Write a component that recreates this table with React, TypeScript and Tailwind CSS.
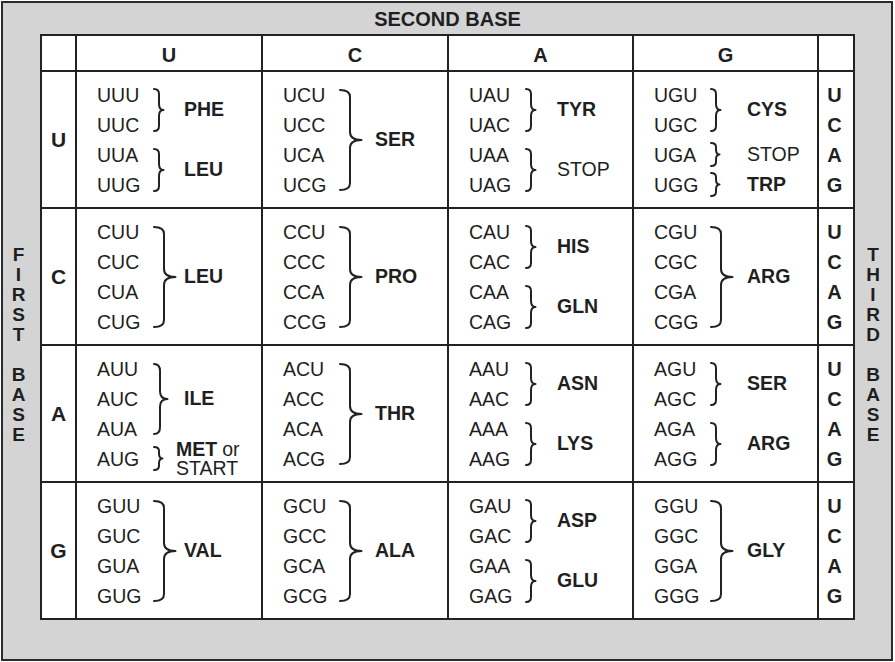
import React from "react";

type Group = { c: string[]; l: React.ReactNode; normal?: boolean; shift?: string };
type Row = { base: string; cells: Group[][] };

const rows: Row[] = [
  {
    base: "U",
    cells: [
      [
        { c: ["UUU", "UUC"], l: "PHE" },
        { c: ["UUA", "UUG"], l: "LEU" },
      ],
      [{ c: ["UCU", "UCC", "UCA", "UCG"], l: "SER" }],
      [
        { c: ["UAU", "UAC"], l: "TYR" },
        { c: ["UAA", "UAG"], l: "STOP", normal: true },
      ],
      [
        { c: ["UGU", "UGC"], l: "CYS" },
        { c: ["UGA"], l: "STOP", normal: true },
        { c: ["UGG"], l: "TRP" },
      ],
    ],
  },
  {
    base: "C",
    cells: [
      [{ c: ["CUU", "CUC", "CUA", "CUG"], l: "LEU" }],
      [{ c: ["CCU", "CCC", "CCA", "CCG"], l: "PRO" }],
      [
        { c: ["CAU", "CAC"], l: "HIS" },
        { c: ["CAA", "CAG"], l: "GLN" },
      ],
      [{ c: ["CGU", "CGC", "CGA", "CGG"], l: "ARG" }],
    ],
  },
  {
    base: "A",
    cells: [
      [
        { c: ["AUU", "AUC", "AUA"], l: "ILE" },
        {
          c: ["AUG"],
          shift: "ml-[-9px]",
          l: (
            <div className="flex flex-col leading-[19px] my-[-4px]">
              <div>
                <span className="font-bold">MET</span>
                <span className="font-normal ml-[5px]">or</span>
              </div>
              <div className="font-normal">START</div>
            </div>
          ),
        },
      ],
      [{ c: ["ACU", "ACC", "ACA", "ACG"], l: "THR" }],
      [
        { c: ["AAU", "AAC"], l: "ASN" },
        { c: ["AAA", "AAG"], l: "LYS" },
      ],
      [
        { c: ["AGU", "AGC"], l: "SER" },
        { c: ["AGA", "AGG"], l: "ARG" },
      ],
    ],
  },
  {
    base: "G",
    cells: [
      [{ c: ["GUU", "GUC", "GUA", "GUG"], l: "VAL" }],
      [{ c: ["GCU", "GCC", "GCA", "GCG"], l: "ALA" }],
      [
        { c: ["GAU", "GAC"], l: "ASP" },
        { c: ["GAA", "GAG"], l: "GLU" },
      ],
      [{ c: ["GGU", "GGC", "GGA", "GGG"], l: "GLY" }],
    ],
  },
];

const colShift = ["ml-[-1px]", "ml-[4px]", "ml-[0px]", "ml-[5px]"];

const braceSize: Record<number, [number, number]> = {
  1: [10, 25],
  2: [11, 44],
  3: [15, 72],
  4: [23, 102],
};

function Brace({ n }: { n: number }) {
  const [w, h] = braceSize[n];
  const a = n >= 3 ? Math.round(w * 0.48) : 6;
  const r = n >= 3 ? 8 : n === 2 ? 6 : 5;
  const m = h / 2;
  const d = `M1 1 Q${a} 1 ${a} ${r} L${a} ${m - r} Q${a} ${m} ${w - 0.5} ${m} Q${a} ${m} ${a} ${m + r} L${a} ${h - r} Q${a} ${h - 1} 1 ${h - 1}`;
  return (
    <svg width={w} height={h} viewBox={`0 0 ${w} ${h}`} className="overflow-visible">
      <path d={d} fill="none" stroke="#222" strokeWidth={2} strokeLinecap="round" strokeLinejoin="round" />
    </svg>
  );
}

function Cell({ groups, col }: { groups: Group[]; col: number }) {
  return (
    <div className="bg-white flex flex-col justify-center pl-[20px]">
      {groups.map((g, i) => (
        <div key={i} className="flex items-center">
          <div className="w-[56px] flex flex-col">
            {g.c.map((c) => (
              <div key={c} className="h-[30px] leading-[30px]">
                {c}
              </div>
            ))}
          </div>
          <div className="w-[32px] flex items-center">
            <Brace n={g.c.length} />
          </div>
          <div className={`${g.shift ?? colShift[col]} ${g.normal ? "font-normal" : "font-bold"}`}>{g.l}</div>
        </div>
      ))}
    </div>
  );
}

function Vertical({ text }: { text: string }) {
  return (
    <div className="flex flex-col items-center text-[19px] font-bold leading-[20px]">
      {text.split("").map((ch, i) => (
        <div key={i} className="h-[20px]">
          {ch === " " ? "\u00a0" : ch}
        </div>
      ))}
    </div>
  );
}

export default function App() {
  return (
    <div className="w-[895px] h-[662px] bg-white pt-[1px] pl-[1px] font-['Liberation_Sans',Arial,sans-serif] text-[#1f1f1f] text-[19.5px]">
      <div className="w-[892px] h-[660px] border-2 border-[#2b2b2b] bg-[#d4d4d4] flex flex-col">
        <div className="h-[31px] ml-[37px] w-[815px] flex items-center justify-center text-[20px] font-bold">
          SECOND BASE
        </div>
        <div className="flex">
          <div className="w-[37px] h-[586px] pt-[36px] pr-[6px] flex items-center justify-center">
            <Vertical text="FIRST BASE" />
          </div>
          <div className="w-[815px] h-[586px] bg-[#222] p-[2px] grid grid-cols-[33px_184px_184px_183px_183px_34px] grid-rows-[34px_135px_135px_135px_135px] gap-[2px]">
            <div className="bg-white" />
            {["U", "C", "A", "G"].map((b) => (
              <div key={b} className="bg-white flex items-center justify-center pt-[3px] text-[20px] font-bold">
                {b}
              </div>
            ))}
            <div className="bg-white" />
            {rows.map((row) => (
              <React.Fragment key={row.base}>
                <div className="bg-white flex items-center justify-center text-[21px] font-bold">{row.base}</div>
                {row.cells.map((groups, ci) => (
                  <Cell key={ci} groups={groups} col={ci} />
                ))}
                <div className="bg-white flex flex-col justify-center items-center pr-[3px] text-[20px] font-bold">
                  {["U", "C", "A", "G"].map((t) => (
                    <div key={t} className="h-[30px] leading-[30px]">
                      {t}
                    </div>
                  ))}
                </div>
              </React.Fragment>
            ))}
          </div>
          <div className="w-[36px] h-[586px] pt-[36px] flex items-center justify-center">
            <Vertical text="THIRD BASE" />
          </div>
        </div>
      </div>
    </div>
  );
}
